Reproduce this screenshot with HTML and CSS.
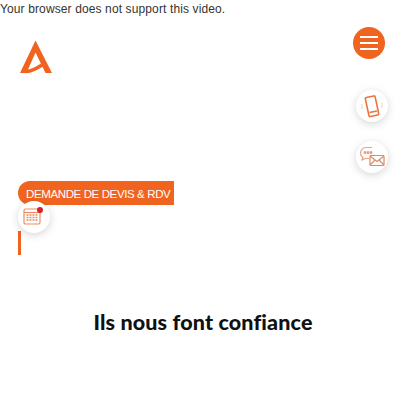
FILE: index.html
```html
<!DOCTYPE html>
<html lang="fr">
<head>
<meta charset="utf-8">
<title>Ils nous font confiance</title>
<link rel="stylesheet" href="styles.css">
</head>
<body>
<p class="fallback">Your browser does not support this video.</p>

<a class="logo" href="#" aria-label="Logo">
<svg width="34" height="34" viewBox="0 0 34 34"><path d="M16.500 0.500 L33 33 L26.500 33 L16.500 12.500 L7.500 33 L1 33 Z" fill="#f0641f"/><path d="M7 31.500 Q14 31 23 25" fill="none" stroke="#f0641f" stroke-width="3.600"/></svg>
</a>

<button class="menu" aria-label="Menu"><span></span><span></span><span></span></button>

<div class="float-actions">
  <a class="round" href="#" aria-label="Téléphone">
    <svg width="26" height="26" viewBox="0 0 26 26" fill="none" stroke="#ea7440"><rect x="8" y="3.500" width="10" height="19.500" rx="1.200" transform="rotate(-12 13 13)" stroke-width="1.600"/><path d="M10.500 19.500l7.500-1.500" stroke-width="1.600"/><path d="M3 11v5M23 10v5" stroke="#f5cdb8" stroke-width="1"/></svg>
  </a>
  <a class="round" href="#" aria-label="Message">
    <svg class="mail" width="30" height="26" viewBox="0 0 30 26" fill="none" stroke="#e8a184" stroke-width="1.200"><path d="M15 3.500H9a5.500 5.500 0 0 0-3 10l-1 2.500 3.500-1.500H12"/><circle cx="8" cy="8.500" r=".9" fill="#d9764c"/><circle cx="11" cy="8.500" r=".9" fill="#d9764c"/><circle cx="14" cy="8.500" r=".9" fill="#d9764c"/><rect x="13" y="11.500" width="14" height="10" rx="1" stroke="#dd8a66"/><path d="M13 12l7 5.500 7-5.500M13 21l5-5M27 21l-5-5" stroke="#dd8a66"/></svg>
  </a>
</div>

<div class="devis">
  <a class="pill" href="#">DEMANDE DE DEVIS &amp; RDV</a>
  <div class="bar"></div>
  <a class="round cal" href="#" aria-label="Calendrier">
    <svg class="cal-icon" width="20" height="20" viewBox="0 0 20 20" fill="none" stroke="#ef8a5c"><rect x="2" y="3" width="16" height="15" rx="1.500" stroke-width="1.200"/><path d="M2 6.500h16" stroke-width="1.200"/><path d="M4.500 9h11M4.500 11.500h11M4.500 14h11" stroke-width="1.300" stroke-dasharray="2 1"/></svg>
    <span class="badge"></span>
  </a>
</div>

<h2 class="title">Ils nous font confiance</h2>
</body>
</html>
```
FILE: styles.css
```css
* { box-sizing: border-box; }
html, body { margin: 0; height: 400px; overflow: hidden; background: #fff; }
body { font-family: "Liberation Sans", Arial, sans-serif; color: #333; position: relative; }
.fallback { margin: 0; font-size: 12px; line-height: 19px; letter-spacing: .12px; color: #333; }
.logo { position: absolute; left: 19px; top: 40px; display: block; line-height: 0; }
.menu { position: absolute; left: 353px; top: 27px; width: 32px; height: 32px; border: 0; padding: 0; border-radius: 50%; background: #f0641f; display: flex; flex-direction: column; justify-content: center; align-items: center; gap: 4px; }
.menu span { display: block; width: 18px; height: 2px; background: #fff; }
.round { width: 32px; height: 32px; border-radius: 50%; background: #fff; box-shadow: 0 2px 8px rgba(0,0,0,.17); display: flex; align-items: center; justify-content: center; }
.float-actions { position: absolute; left: 356px; top: 90px; display: flex; flex-direction: column; gap: 19px; }
.devis { position: absolute; left: 18px; top: 181px; width: 156px; }
.pill { display: block; height: 24px; line-height: 26px; padding-left: 8px; border-radius: 12px 0 0 12px; background: #f0641f; color: #fff; font-size: 11.5px; letter-spacing: -.38px; text-decoration: none; white-space: nowrap; }
.bar { width: 3px; height: 24px; margin-top: 26px; background: #f0641f; }
.cal { position: absolute; left: 0; top: 20px; }
.cal-icon { margin: -3px 5px 0 0; }
.badge { position: absolute; left: 19px; top: 6px; width: 6px; height: 6px; border-radius: 50%; background: #d3232a; }
.title { position: absolute; left: 0; right: 0; top: 309px; margin: 0; text-align: center; font-family: Lato, sans-serif; font-weight: 900; font-size: 21.5px; line-height: 26px; letter-spacing: .14px; color: #111; font-variant-ligatures: none; }
```
